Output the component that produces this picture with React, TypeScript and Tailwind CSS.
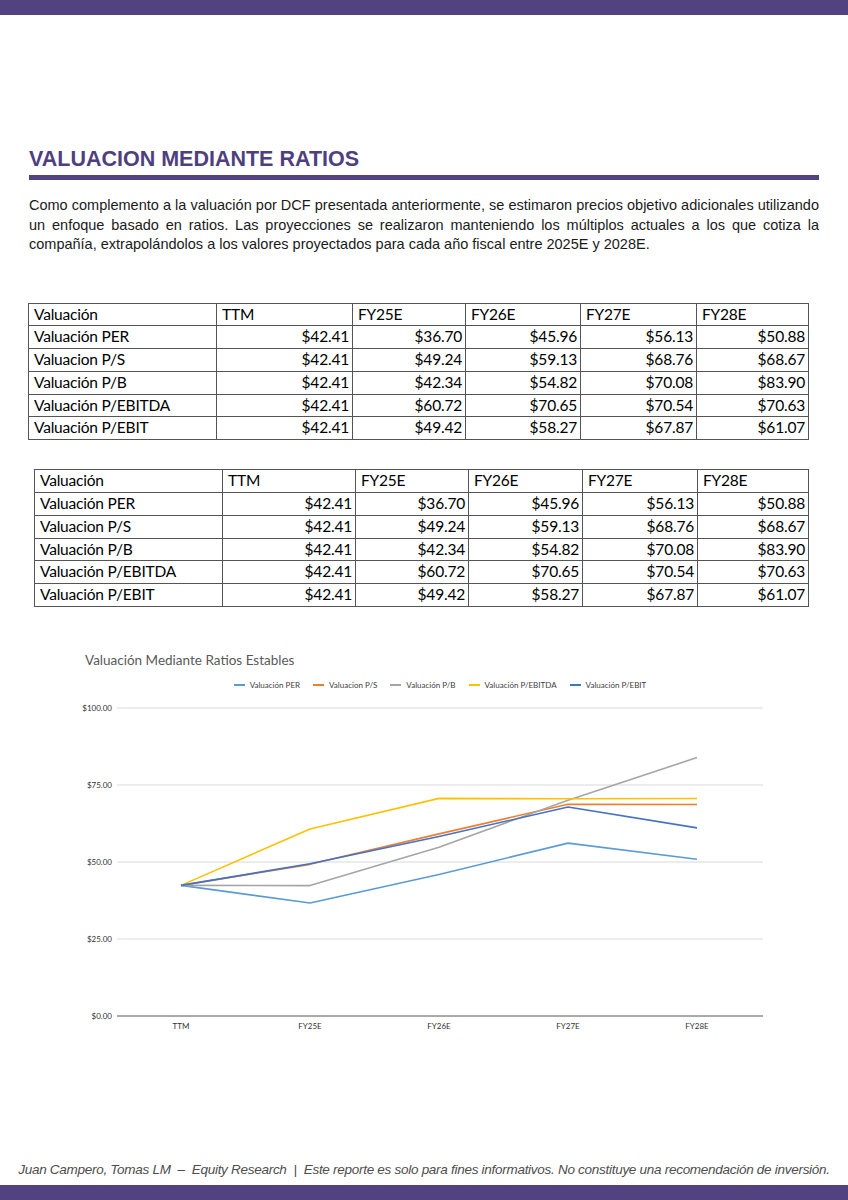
const rows = [
  ['Valuación PER', '$42.41', '$36.70', '$45.96', '$56.13', '$50.88'],
  ['Valuacion P/S', '$42.41', '$49.24', '$59.13', '$68.76', '$68.67'],
  ['Valuación P/B', '$42.41', '$42.34', '$54.82', '$70.08', '$83.90'],
  ['Valuación P/EBITDA', '$42.41', '$60.72', '$70.65', '$70.54', '$70.63'],
  ['Valuación P/EBIT', '$42.41', '$49.42', '$58.27', '$67.87', '$61.07'],
]
const heads = ['Valuación', 'TTM', 'FY25E', 'FY26E', 'FY27E', 'FY28E']

const series = [
  { name: 'Valuación PER', color: '#5b9bd5', v: [42.41, 36.7, 45.96, 56.13, 50.88] },
  { name: 'Valuacion P/S', color: '#ed7d31', v: [42.41, 49.24, 59.13, 68.76, 68.67] },
  { name: 'Valuación P/B', color: '#a5a5a5', v: [42.41, 42.34, 54.82, 70.08, 83.9] },
  { name: 'Valuación P/EBITDA', color: '#ffc000', v: [42.41, 60.72, 70.65, 70.54, 70.63] },
  { name: 'Valuación P/EBIT', color: '#4472c4', v: [42.41, 49.42, 58.27, 67.87, 61.07] },
]

function RatioTable ({ widths }: { widths: string[] }) {
  return (
    <table className="border-collapse text-[15.5px] leading-[21.8px] text-black tracking-[-0.2px]" style={{ fontFamily: 'Lato, "Open Sans", sans-serif' }}>
      <thead>
        <tr>
          {heads.map((h, i) => (
            <td key={i} className={`${widths[i]} border border-[#555] px-[5px] text-left`}>{h}</td>
          ))}
        </tr>
      </thead>
      <tbody>
        {rows.map((r, i) => (
          <tr key={i}>
            {r.map((c, j) => (
              <td key={j} className={`border border-[#555] ${j === 0 ? 'px-[5px] text-left' : 'px-[3px] text-right'}`}>{c}</td>
            ))}
          </tr>
        ))}
      </tbody>
    </table>
  )
}

function Chart () {
  const xs = [121, 250, 379, 508, 637]
  const y = (v: number) => 320 - v * 3.08
  const ticks = [100, 75, 50, 25, 0]
  return (
    <svg width="720" height="345" className="block" style={{ fontFamily: 'Lato, "Open Sans", sans-serif' }}>
      {ticks.map(t => (
        <g key={t}>
          <line x1="57" x2="703" y1={y(t)} y2={y(t)} stroke={t === 0 ? '#8c8c8c' : '#d9d9d9'} strokeWidth={t === 0 ? 1.5 : 1} />
          <text x="52" y={y(t) + 3} textAnchor="end" fontSize="8" fill="#333333">${t.toFixed(2)}</text>
        </g>
      ))}
      {['TTM', 'FY25E', 'FY26E', 'FY27E', 'FY28E'].map((l, i) => (
        <text key={l} x={xs[i]} y="333" textAnchor="middle" fontSize="8" fill="#333333">{l}</text>
      ))}
      {series.map(s => (
        <polyline key={s.name} fill="none" stroke={s.color} strokeWidth="1.6" strokeLinejoin="round"
          points={s.v.map((v, i) => `${xs[i]},${y(v)}`).join(' ')} />
      ))}
    </svg>
  )
}

export default function App () {
  return (
    <div className="relative w-[848px] h-[1200px] bg-white overflow-hidden" style={{ fontFamily: '"Liberation Sans", Arial, sans-serif' }}>
      <div className="h-[15px] bg-[#52427f]" />
      <section className="px-[29px]">
        <h1 className="mt-[132px] text-[21.5px] leading-[24px] font-bold text-[#4e3f80]">VALUACION MEDIANTE RATIOS</h1>
        <div className="mt-[4px] h-[5px] bg-[#52427f]" />
        <p className="mt-[16px] text-[14.5px] leading-[19.5px] text-[#1a1a1a] text-justify">
          Como complemento a la valuación por DCF presentada anteriormente, se estimaron precios objetivo adicionales utilizando un enfoque basado en ratios. Las proyecciones se realizaron manteniendo los múltiplos actuales a los que cotiza la compañía, extrapolándolos a los valores proyectados para cada año fiscal entre 2025E y 2028E.
        </p>
      </section>
      <div className="mt-[48px] ml-[28px]">
        <RatioTable widths={['w-[188px]', 'w-[136px]', 'w-[113px]', 'w-[115px]', 'w-[116px]', 'w-[112px]']} />
      </div>
      <div className="mt-[29px] ml-[34px]">
        <RatioTable widths={['w-[188px]', 'w-[133px]', 'w-[113px]', 'w-[114px]', 'w-[115px]', 'w-[111px]']} />
      </div>
      <div className="mt-[43px] ml-[60px]">
        <div className="ml-[25px] text-[13.5px] text-[#595959]" style={{ fontFamily: 'Lato, "Open Sans", sans-serif' }}>Valuación Mediante Ratios Estables</div>
        <div className="ml-[57px] w-[646px] mt-[9px] flex justify-center gap-[13px] text-[8px] text-[#404040]" style={{ fontFamily: 'Lato, "Open Sans", sans-serif' }}>
          {series.map(s => (
            <div key={s.name} className="flex items-center gap-[5px]">
              <span className="block w-[11px] h-[2px]" style={{ background: s.color }} />
              <span>{s.name}</span>
            </div>
          ))}
        </div>
        <div className="mt-[5px]">
          <Chart />
        </div>
      </div>
      <div className="absolute left-0 right-0 bottom-[15px] h-[30px] flex items-center justify-center">
        <p className="italic text-[13.5px] text-[#4d4d4d] tracking-[-0.28px] whitespace-nowrap">
          Juan Campero, Tomas LM&nbsp; –&nbsp; Equity Research&nbsp; |&nbsp; Este reporte es solo para fines informativos. No constituye una recomendación de inversión.
        </p>
      </div>
      <div className="absolute left-0 right-0 bottom-0 h-[15px] bg-[#52427f]" />
    </div>
  )
}
